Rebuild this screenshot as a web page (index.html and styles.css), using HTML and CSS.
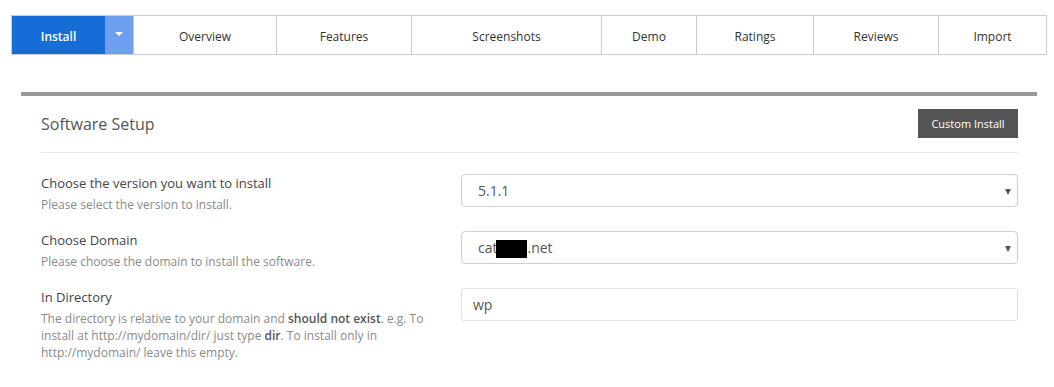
FILE: index.html
```html
<!DOCTYPE html>
<html lang="en">
<head>
<meta charset="utf-8">
<title>Software Setup</title>
<link rel="stylesheet" href="styles.css">
</head>
<body>
<div class="page">
  <nav class="tabs">
    <div class="tab tab-install">Install</div>
    <div class="tab tab-caret"><span class="caret"></span></div>
    <div class="tab">Overview</div>
    <div class="tab">Features</div>
    <div class="tab">Screenshots</div>
    <div class="tab">Demo</div>
    <div class="tab">Ratings</div>
    <div class="tab">Reviews</div>
    <div class="tab">Import</div>
  </nav>

  <section class="panel">
    <header class="panel-head">
      <h2 class="panel-title">Software Setup</h2>
      <button class="btn-dark" type="button">Custom Install</button>
    </header>

    <div class="form-row">
      <div class="label-col">
        <div class="label">Choose the version you want to install</div>
        <div class="desc">Please select the version to install.</div>
      </div>
      <div class="field field-select"><span class="field-text">5.1.1</span><span class="arrow"></span></div>
    </div>

    <div class="form-row">
      <div class="label-col">
        <div class="label">Choose Domain</div>
        <div class="desc">Please choose the domain to install the software.</div>
      </div>
      <div class="field field-select"><span class="field-text">cat<span class="redact"></span>.net</span><span class="arrow"></span></div>
    </div>

    <div class="form-row">
      <div class="label-col">
        <div class="label">In Directory</div>
        <div class="desc">The directory is relative to your domain and <b>should not exist</b>. e.g. To install at http://mydomain/dir/ just type <b>dir</b>. To install only in http://mydomain/ leave this empty.</div>
      </div>
      <div class="field field-input"><span class="field-text">wp</span></div>
    </div>
  </section>
</div>
</body>
</html>
```

FILE: styles.css
```css
* { box-sizing: border-box; }

html, body {
  margin: 0;
  padding: 0;
  background: #fff;
}

body {
  font-family: "Open Sans", "Liberation Sans", Arial, sans-serif;
  color: #333;
}

.page {
  padding: 15px 0 0 11px;
  width: 1054px;
}

/* Tabs */
.tabs {
  display: grid;
  grid-template-columns: 93px 28px 143px 135px 190px 95px 117px 125px 108px;
  width: 1036px;
  height: 40px;
  border: 1px solid #cccccc;
}

.tab {
  display: flex;
  align-items: center;
  justify-content: center;
  padding-top: 2px;
  font-size: 12px;
  color: #333;
  border-left: 1px solid #cccccc;
}

.tab-install {
  border-left: none;
  background: #166dd6;
  color: #fff;
  font-weight: 600;
}

.tab-caret {
  border-left: none;
  background: #6d9eef;
  padding-top: 0;
}

.caret {
  width: 0;
  height: 0;
  border-left: 4px solid transparent;
  border-right: 4px solid transparent;
  border-top: 4px solid #fff;
  margin-top: -2px;
}

/* Panel */
.panel {
  margin: 37px 0 0 10px;
  width: 1016px;
  border-top: 4px solid #999999;
  padding: 0 19px 0 20px;
}

.panel-head {
  display: flex;
  align-items: center;
  justify-content: space-between;
  padding: 13px 0 14px;
  border-bottom: 1px solid #e8e8e8;
}

.panel-title {
  margin: 0;
  font-size: 16px;
  font-weight: 400;
  color: #555;
  line-height: 22px;
}

.btn-dark {
  width: 100px;
  height: 29px;
  border: none;
  border-radius: 0;
  background: #555555;
  color: #fff;
  font-family: "Open Sans", "Liberation Sans", Arial, sans-serif;
  font-size: 11px;
  padding: 0;
}

/* Form rows */
.form-row {
  display: grid;
  grid-template-columns: 420px 1fr;
  align-items: start;
}

.panel-head + .form-row { margin-top: 21px; }

.form-row + .form-row { margin-top: 18px; }

.label-col { margin-top: -1px; }

.label {
  font-size: 13px;
  line-height: 20px;
  color: #444;
  margin-bottom: 3px;
}

.desc {
  font-size: 12px;
  line-height: 17px;
  color: #8a8a8a;
  padding-right: 20px;
}

.desc b {
  font-weight: 600;
  color: #555;
}

.field {
  position: relative;
  height: 33px;
  border: 1px solid #cfcfcf;
  border-radius: 4px;
  display: flex;
  align-items: center;
  font-size: 14px;
  color: #555;
}

.field-select { padding-left: 16px; }

.field-input {
  padding-left: 11px;
  border-color: #e2e2e2;
  border-radius: 3px;
}

.field-text {
  display: inline-flex;
  align-items: center;
}

.redact {
  display: inline-block;
  width: 31px;
  height: 18px;
  background: #000;
  margin: 3px 0 0 -1px;
}

.arrow {
  position: absolute;
  right: 6px;
  top: 14px;
  width: 0;
  height: 0;
  border-left: 3.5px solid transparent;
  border-right: 3.5px solid transparent;
  border-top: 6px solid #555;
}
```
